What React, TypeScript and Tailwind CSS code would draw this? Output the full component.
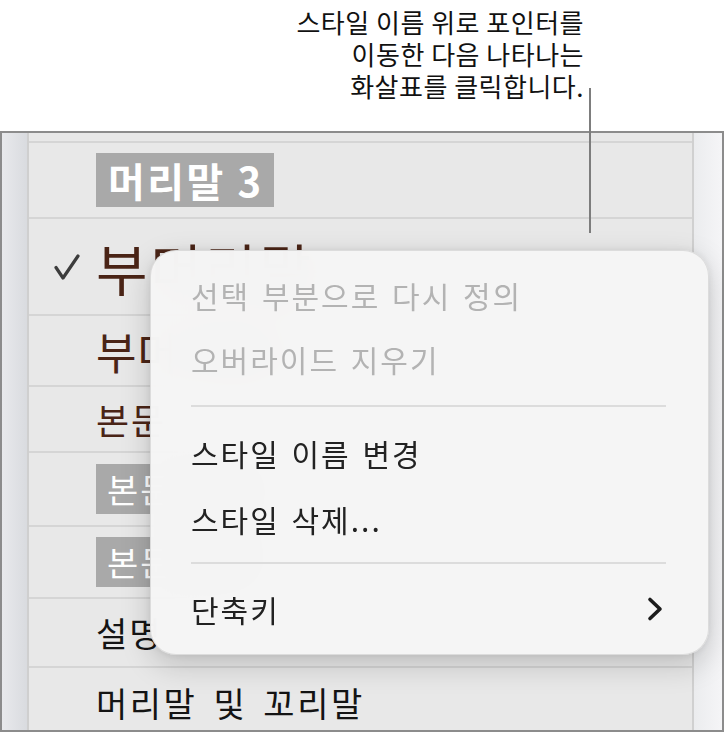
import { ReactNode } from 'react';

const kr = "font-['Noto_Sans_CJK_KR','Noto_Sans',sans-serif]";

interface StyleRow {
  height: string;
  content: ReactNode;
  checked?: boolean;
}

const brown = 'text-[#4a2416]';

const rows: StyleRow[] = [
  {
    height: 'h-[74px]',
    content: (
      <span className="flex h-[54px] items-center bg-[#a9a9a9] pl-[12px] pr-[10px] text-[40px] leading-none font-bold tracking-[2.5px] text-white">
        머리말 3
      </span>
    ),
  },
  {
    height: 'h-[95px]',
    checked: true,
    content: <span className={`text-[56px] leading-none tracking-[3px] ${brown}`}>부머리말</span>,
  },
  {
    height: 'h-[69px]',
    content: <span className={`text-[44px] leading-none tracking-[1px] ${brown}`}>부머리말 2</span>,
  },
  {
    height: 'h-[64px]',
    content: <span className={`text-[36px] leading-none tracking-[2px] ${brown}`}>본문</span>,
  },
  {
    height: 'h-[72px]',
    content: (
      <span className="flex h-[50px] items-center bg-[#a9a9a9] px-[11px] text-[34px] leading-none tracking-[2px] text-white">
        본문 강조
      </span>
    ),
  },
  {
    height: 'h-[70px]',
    content: (
      <span className="flex h-[50px] items-center bg-[#a9a9a9] px-[11px] text-[34px] leading-none tracking-[2px] text-white">
        본문 인용
      </span>
    ),
  },
  {
    height: 'h-[67px]',
    content: <span className="text-[34px] leading-none tracking-[2px] text-[#141414]">설명</span>,
  },
];

const CheckMark = () => (
  <svg width="28" height="28" viewBox="0 0 28 28" fill="none">
    <path
      d="M3 14.5 L10 25 L25 3"
      stroke="#3c3c3c"
      strokeWidth="3.2"
      strokeLinecap="round"
      strokeLinejoin="round"
    />
  </svg>
);

const Chevron = () => (
  <svg width="18" height="26" viewBox="0 0 18 26" fill="none">
    <path
      d="M4 3.5 L14 13 L4 22.5"
      stroke="#1c1c1c"
      strokeWidth="3.6"
      strokeLinecap="round"
      strokeLinejoin="round"
    />
  </svg>
);

const menuText = 'text-[30px] leading-none tracking-[2px] [word-spacing:3px]';

const StyleMenu = () => (
  <div className="absolute left-[150px] top-[250px] flex h-[405px] w-[559px] flex-col rounded-[26px] border border-black/10 bg-[#f5f5f5]/[0.98] px-[40px] pt-[12px] shadow-[0_10px_30px_rgba(0,0,0,0.18),0_0_8px_rgba(0,0,0,0.08)] backdrop-blur-xl">
    <div className={`flex h-[64px] items-center text-[#b3b3b3] ${menuText}`}>선택 부분으로 다시 정의</div>
    <div className={`flex h-[64px] items-center text-[#b3b3b3] ${menuText}`}>오버라이드 지우기</div>
    <div className="my-[14px] mr-[2px] h-[2px] bg-[#dcdcdc]" />
    <div className={`flex h-[64px] items-center text-[#222] ${menuText}`}>스타일 이름 변경</div>
    <div className={`flex h-[68px] items-center text-[#222] ${menuText}`}>스타일 삭제...</div>
    <div className="my-[9px] mr-[2px] h-[2px] bg-[#dcdcdc]" />
    <div className={`flex h-[72px] items-center justify-between pr-[4px] text-[#222] ${menuText}`}>
      <span>단축키</span>
      <Chevron />
    </div>
  </div>
);

export default function App() {
  return (
    <div className={`relative h-[732px] w-[724px] overflow-hidden bg-white ${kr}`}>
      <div className="flex h-[131px] justify-end pr-[140px] pt-[6px]">
        <p className="text-right text-[26px] leading-[32px] tracking-[0.5px] text-[#111]">
          스타일 이름 위로 포인터를
          <br />
          이동한 다음 나타나는
          <br />
          화살표를 클릭합니다.
        </p>
      </div>

      <div className="flex h-[601px] border-2 border-[#8c8c8c]">
        <div className="w-[27px] border-r-2 border-[#cfcfcf] bg-gradient-to-r from-[#e8e9ec] to-[#d9dbdf]" />

        <div className="flex flex-1 flex-col bg-[#e8e8e8]">
          <div className="h-[10px] border-b-2 border-[#d5d5d5]" />
          {rows.map((row, i) => (
            <div key={i} className={`box-content flex items-center border-b-2 border-[#d5d5d5] pl-[24px] ${row.height}`}>
              <div className="flex w-[43px] items-center">{row.checked && <CheckMark />}</div>
              {row.content}
            </div>
          ))}
          <div className="flex flex-1 items-center pl-[67px] pt-[8px]">
            <span className="text-[34px] leading-none tracking-[2.5px] text-[#141414] [word-spacing:6px]">
              머리말 및 꼬리말
            </span>
          </div>
        </div>

        <div className="w-[30px] border-l-2 border-[#d0d0d0] bg-gradient-to-r from-[#ebecee] to-[#f5f5f7]" />
      </div>

      <div className="absolute left-[589px] top-[88px] h-[145px] w-[2px] bg-[#7d7d7d]" />

      <StyleMenu />
    </div>
  );
}
